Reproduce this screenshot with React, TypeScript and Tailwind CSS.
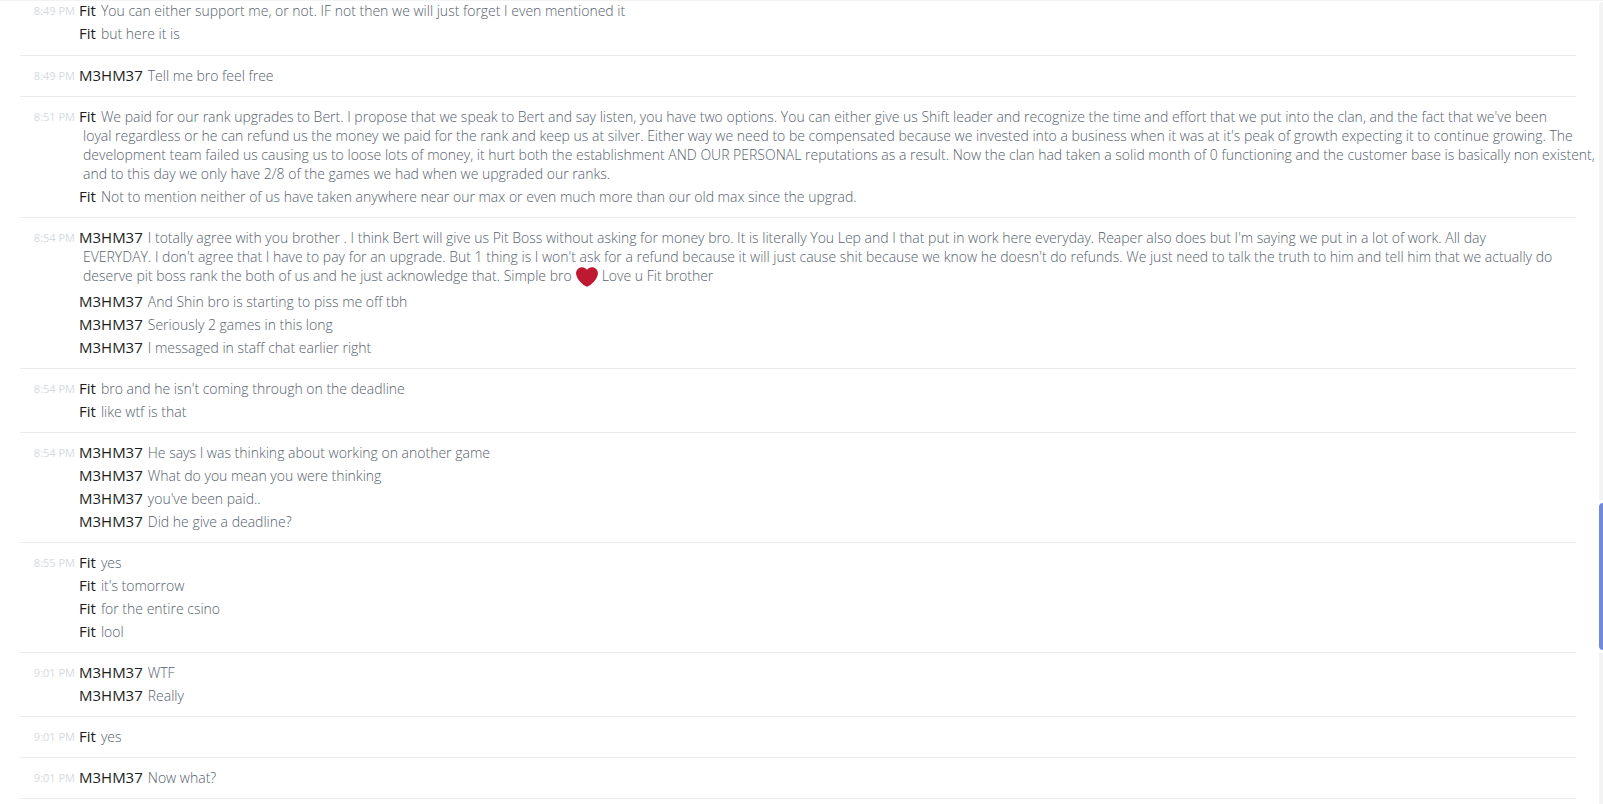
import React from 'react';

interface Message {
  author: string;
  lines: React.ReactNode[];
}

interface MessageGroup {
  time: string;
  messages: Message[];
}

const HeartEmoji = () => (
  <svg viewBox="0 0 36 36" role="img" aria-label="heart" className="inline-block size-[22px] mx-1 align-middle">
    <path
      fill="#BE1931"
      d="M35.885 11.833c0-5.45-4.418-9.868-9.867-9.868-3.308 0-6.227 1.633-8.018 4.129-1.791-2.496-4.71-4.129-8.017-4.129-5.45 0-9.868 4.417-9.868 9.868 0 .772.098 1.52.266 2.241C1.751 22.587 11.216 31.568 18 34.034c6.783-2.466 16.249-11.447 17.617-19.959.17-.721.268-1.469.268-2.242z"
    />
  </svg>
);

const say = (author: string, ...lines: React.ReactNode[]): Message => ({ author, lines });

const GROUPS: MessageGroup[] = [
  {
    time: '8:49 PM',
    messages: [
      say('Fit', 'You can either support me, or not. IF not then we will just forget I even mentioned it'),
      say('Fit', 'but here it is'),
    ],
  },
  { time: '8:49 PM', messages: [say('M3HM37', 'Tell me bro feel free')] },
  {
    time: '8:51 PM',
    messages: [
      say(
        'Fit',
        "We paid for our rank upgrades to Bert. I propose that we speak to Bert and say listen, you have two options. You can either give us Shift leader and recognize the time and effort that we put into the clan, and the fact that we've been",
        "loyal regardless or he can refund us the money we paid for the rank and keep us at silver. Either way we need to be compensated because we invested into a business when it was at it's peak of growth expecting it to continue growing. The",
        'development team failed us causing us to loose lots of money, it hurt both the establishment AND OUR PERSONAL reputations as a result. Now the clan had taken a solid month of 0 functioning and the customer base is basically non existent,',
        'and to this day we only have 2/8 of the games we had when we upgraded our ranks.'
      ),
      say('Fit', 'Not to mention neither of us have taken anywhere near our max or even much more than our old max since the upgrad.'),
    ],
  },
  {
    time: '8:54 PM',
    messages: [
      say(
        'M3HM37',
        "I totally agree with you brother . I think Bert will give us Pit Boss without asking for money bro. It is literally You Lep and I that put in work here everyday. Reaper also does but I'm saying we put in a lot of work. All day",
        "EVERYDAY. I don't agree that I have to pay for an upgrade. But 1 thing is I won't ask for a refund because it will just cause shit because we know he doesn't do refunds. We just need to talk the truth to him and tell him that we actually do",
        <>deserve pit boss rank the both of us and he just acknowledge that. Simple bro<HeartEmoji />Love u Fit brother</>
      ),
      say('M3HM37', 'And Shin bro is starting to piss me off tbh'),
      say('M3HM37', 'Seriously 2 games in this long'),
      say('M3HM37', 'I messaged in staff chat earlier right'),
    ],
  },
  {
    time: '8:54 PM',
    messages: [say('Fit', "bro and he isn't coming through on the deadline"), say('Fit', 'like wtf is that')],
  },
  {
    time: '8:54 PM',
    messages: [
      say('M3HM37', 'He says I was thinking about working on another game'),
      say('M3HM37', 'What do you mean you were thinking'),
      say('M3HM37', "you've been paid.."),
      say('M3HM37', 'Did he give a deadline?'),
    ],
  },
  {
    time: '8:55 PM',
    messages: [say('Fit', 'yes'), say('Fit', "it's tomorrow"), say('Fit', 'for the entire csino'), say('Fit', 'lool')],
  },
  { time: '9:01 PM', messages: [say('M3HM37', 'WTF'), say('M3HM37', 'Really')] },
  { time: '9:01 PM', messages: [say('Fit', 'yes')] },
  { time: '9:01 PM', messages: [say('M3HM37', 'Now what?')] },
];

const MessageRow = ({ message, time }: { message: Message; time?: string }) => (
  <div className="flex py-[2px] leading-[19px]">
    <time className="w-[55px] mr-1 shrink-0 text-right text-[11px] text-[#d5dade]">{time}</time>
    <p className="flex-1 pl-1 -indent-1 whitespace-nowrap text-[14px] font-light text-[#56616d]">
      <span className="mr-[5px] text-[15px] font-normal text-[#1c1e22]">{message.author}</span>
      {message.lines.map((line, i) => (
        <React.Fragment key={i}>
          {i > 0 && <br />}
          {line}
        </React.Fragment>
      ))}
    </p>
  </div>
);

const App: React.FC = () => {
  return (
    <div className="flex min-h-screen overflow-hidden border-t border-[#f3f3f3] bg-white font-['Open_Sans','Noto_Sans',sans-serif]">
      <main className="flex-1 min-w-0 pl-5 pr-[23px]">
        {GROUPS.map((group, i) => (
          <section key={i} className="border-b border-[#ebebeb] pt-2 pb-[9px] first:-mt-[2px] first:pt-0 first:pb-[10px]">
            {group.messages.map((message, j) => (
              <MessageRow key={j} message={message} time={j === 0 ? group.time : undefined} />
            ))}
          </section>
        ))}
      </main>

      {/* Scrollbar */}
      <div className="flex w-1 shrink-0 flex-col gap-[3px] pt-px">
        <div className="grow-[498] rounded-tl bg-[#f3f3f3]"></div>
        <div className="grow-[147] rounded-l bg-[#7289da]"></div>
        <div className="grow-[151] bg-[#f3f3f3]"></div>
      </div>
    </div>
  );
};

export default App;
